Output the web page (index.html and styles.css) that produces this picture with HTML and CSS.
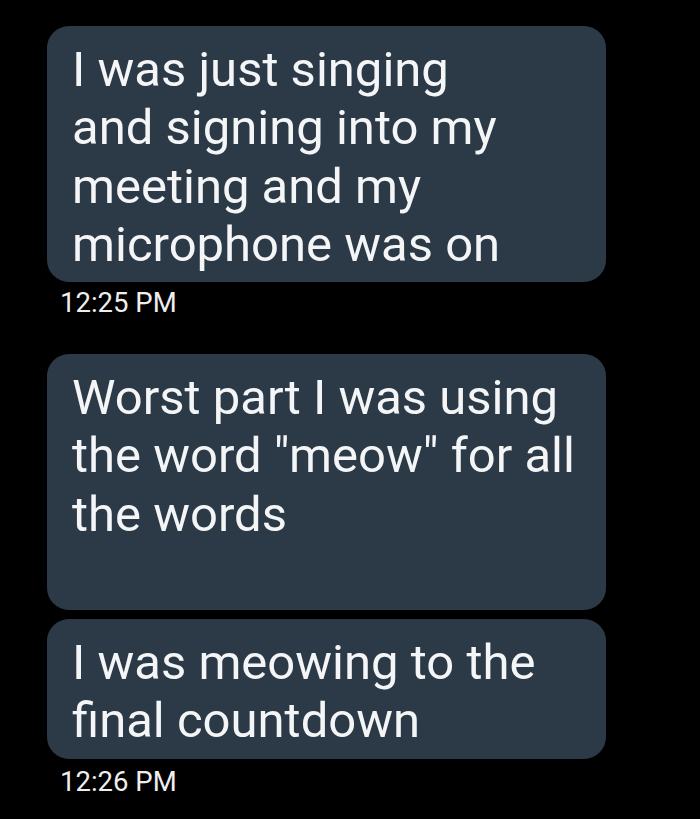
FILE: index.html
```html
<!DOCTYPE html>
<html>
<head>
<meta charset="utf-8">
<link rel="stylesheet" href="styles.css">
</head>
<body>
<main class="thread">
  <section class="group group-first">
    <div class="bubble">I was just singing<br>and signing into my<br>meeting and my<br>microphone was on</div>
    <div class="time">12:25 PM</div>
  </section>
  <section class="group group-second">
    <div class="bubble bubble-tall">Worst part I was using<br>the word "meow" for all<br>the words</div>
    <div class="bubble">I was meowing to the<br>final countdown</div>
    <div class="time time-last">12:26 PM</div>
  </section>
</main>
</body>
</html>
```

FILE: styles.css
```css
html, body {
  margin: 0;
  padding: 0;
  background: #000;
}
body {
  width: 700px;
  height: 819px;
  overflow: hidden;
  font-family: Roboto, "Noto Sans", sans-serif;
  color: #f4f5f6;
}
.thread {
  display: flex;
  flex-direction: column;
  padding: 26px 0 0 47px;
  width: 559px;
}
.group {
  display: flex;
  flex-direction: column;
  gap: 9px;
}
.group-second {
  margin-top: 35px;
}
.bubble {
  background: #2c3a47;
  border-radius: 22px;
  padding: 15px 22px 8px 25px;
  font-size: 49px;
  line-height: 58.3px;
}
.bubble-tall {
  min-height: 233px;
}
.time {
  margin-top: -4px;
  padding-left: 13px;
  font-size: 27.5px;
  line-height: 32px;
  color: #eeeeee;
}
.time-last {
  margin-top: -2px;
}
```
